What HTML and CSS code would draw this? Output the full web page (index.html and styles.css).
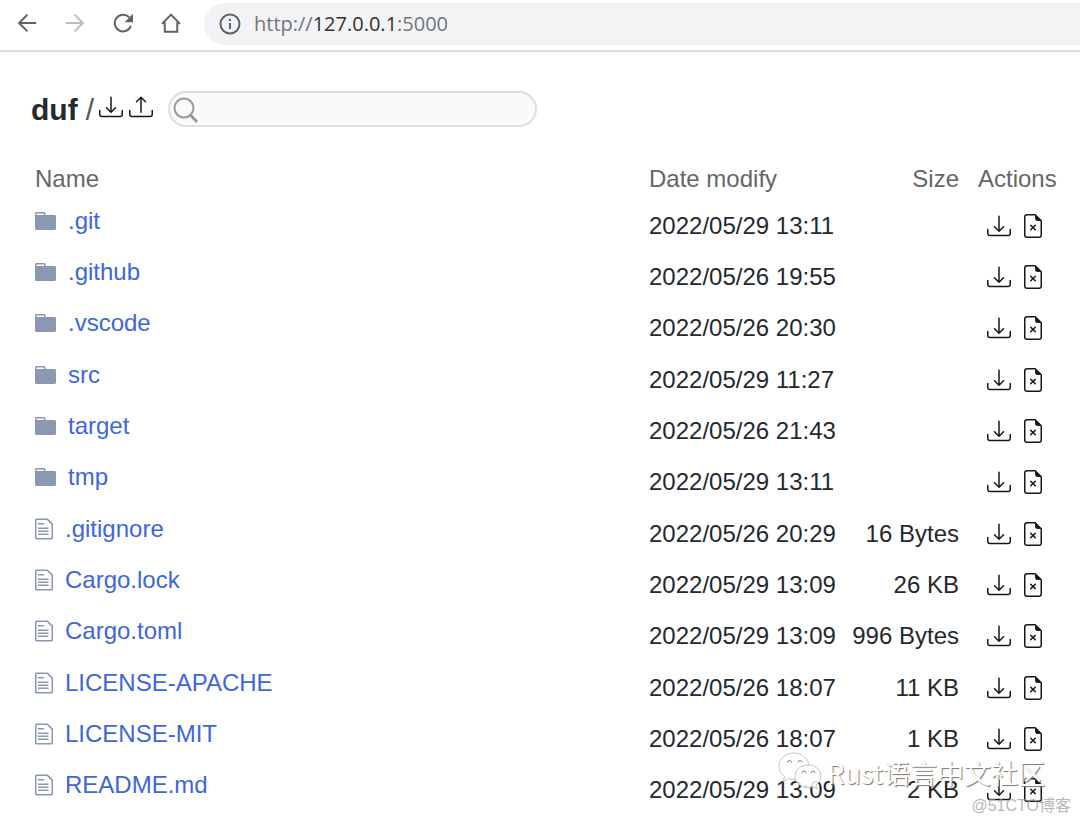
FILE: index.html
```html
<!DOCTYPE html>
<html lang="en">
<head>
<meta charset="utf-8">
<title>duf</title>
<link rel="stylesheet" href="styles.css">
</head>
<body>
<svg class="sprite" aria-hidden="true">
  <symbol id="download" viewBox="0 0 16 16"><path d="M.5 9.9a.5.5 0 0 1 .5.5v2.5a1 1 0 0 0 1 1h12a1 1 0 0 0 1-1v-2.5a.5.5 0 0 1 1 0v2.5a2 2 0 0 1-2 2H2a2 2 0 0 1-2-2v-2.5a.5.5 0 0 1 .5-.5z"/><path d="M7.646 11.854a.5.5 0 0 0 .708 0l3-3a.5.5 0 0 0-.708-.708L8.5 10.293V1.5a.5.5 0 0 0-1 0v8.793L5.354 8.146a.5.5 0 1 0-.708.708l3 3z"/></symbol>
  <symbol id="upload" viewBox="0 0 16 16"><path d="M.5 9.9a.5.5 0 0 1 .5.5v2.5a1 1 0 0 0 1 1h12a1 1 0 0 0 1-1v-2.5a.5.5 0 0 1 1 0v2.5a2 2 0 0 1-2 2H2a2 2 0 0 1-2-2v-2.5a.5.5 0 0 1 .5-.5z"/><path d="M7.646 1.146a.5.5 0 0 1 .708 0l3 3a.5.5 0 0 1-.708.708L8.5 2.707V11.5a.5.5 0 0 1-1 0V2.707L5.354 4.854a.5.5 0 1 1-.708-.708l3-3z"/></symbol>
  <symbol id="delete" viewBox="0 0 16 16"><path d="M6.854 7.146a.5.5 0 1 0-.708.708L7.293 9l-1.147 1.146a.5.5 0 0 0 .708.708L8 9.707l1.146 1.147a.5.5 0 0 0 .708-.708L8.707 9l1.147-1.146a.5.5 0 0 0-.708-.708L8 8.293 6.854 7.146z"/><path d="M14 14V4.5L9.5 0H4a2 2 0 0 0-2 2v12a2 2 0 0 0 2 2h8a2 2 0 0 0 2-2zM9.5 3A1.5 1.5 0 0 0 11 4.5h2V14a1 1 0 0 1-1 1H4a1 1 0 0 1-1-1V2a1 1 0 0 1 1-1h5.5v2z"/><path d="M9.500 0L14 4.500H11A1.500 1.500 0 0 1 9.500 3z"/></symbol>
  <symbol id="folder" viewBox="0 0 14 16"><path d="M13 4H7V3c0-.66-.31-1-1-1H1c-.55 0-1 .45-1 1v10c0 .55.45 1 1 1h12c.55 0 1-.45 1-1V5c0-.55-.45-1-1-1zM6 4H1V3h5v1z" fill-rule="evenodd"/></symbol>
  <symbol id="file" viewBox="0 0 12 16"><path d="M6 5H2V4h4v1zM2 8h7V7H2v1zm0 2h7V9H2v1zm0 2h7v-1H2v1zm10-7.500V14c0 .55-.45 1-1 1H1c-.55 0-1-.45-1-1V2c0-.55.45-1 1-1h7.500L12 4.500zM11 5L8 2H1v12h10V5z"/></symbol>
</svg>

<header class="toolbar">
  <button class="tool" aria-label="Back"><svg viewBox="0 0 24 24"><path d="M23 12H3M12.500 2L2.500 12l10 10"/></svg></button>
  <button class="tool" aria-label="Forward" disabled><svg viewBox="0 0 24 24"><path d="M1 12h20M11.500 2l10 10-10 10"/></svg></button>
  <button class="tool" aria-label="Reload"><svg viewBox="0 0 24 24"><path d="M21.500 15.500A10 10 0 1 1 19.500 5.300"/><path class="solid" d="M24 1v10H14z"/></svg></button>
  <button class="tool" aria-label="Home"><svg viewBox="0 0 24 24"><path d="M1.200 13L12 2l10.800 11M4.500 11v11.500h15V11"/></svg></button>
  <div class="address">
    <svg class="info" viewBox="0 0 22 22" aria-hidden="true"><circle cx="11" cy="11" r="9.500"/><path d="M11 10v6M11 6v2"/></svg>
    <span class="url">http://<b>127.0.0.1</b>:5000</span>
  </div>
</header>

<main class="page">
  <div class="head">
    <h1 class="crumb"><b>duf</b><span class="slash">/</span></h1>
    <div class="tools">
      <a href="#" aria-label="Download folder"><svg class="icon"><use href="#download"/></svg></a>
      <button class="plain" aria-label="Upload files"><svg class="icon"><use href="#upload"/></svg></button>
    </div>
    <form class="search">
      <svg class="lens" viewBox="0 0 26 26" aria-hidden="true"><circle cx="11" cy="11" r="9.500"/><path class="handle" d="M17.500 18l6.500 7"/></svg>
      <input type="text" aria-label="Search">
    </form>
  </div>

  <table class="files">
    <thead>
      <tr><th class="name">Name</th><th class="date">Date modify</th><th class="size">Size</th><th class="actions">Actions</th></tr>
    </thead>
    <tbody>
      <tr><td class="name"><a href="#"><svg class="folder"><use href="#folder"/></svg>.git</a></td><td>2022/05/29 13:11</td><td class="size"></td><td class="actions"><div class="pair"><a href="#" aria-label="Download"><svg class="icon"><use href="#download"/></svg></a><button class="plain" aria-label="Delete"><svg class="icon"><use href="#delete"/></svg></button></div></td></tr>
      <tr><td class="name"><a href="#"><svg class="folder"><use href="#folder"/></svg>.github</a></td><td>2022/05/26 19:55</td><td class="size"></td><td class="actions"><div class="pair"><a href="#" aria-label="Download"><svg class="icon"><use href="#download"/></svg></a><button class="plain" aria-label="Delete"><svg class="icon"><use href="#delete"/></svg></button></div></td></tr>
      <tr><td class="name"><a href="#"><svg class="folder"><use href="#folder"/></svg>.vscode</a></td><td>2022/05/26 20:30</td><td class="size"></td><td class="actions"><div class="pair"><a href="#" aria-label="Download"><svg class="icon"><use href="#download"/></svg></a><button class="plain" aria-label="Delete"><svg class="icon"><use href="#delete"/></svg></button></div></td></tr>
      <tr><td class="name"><a href="#"><svg class="folder"><use href="#folder"/></svg>src</a></td><td>2022/05/29 11:27</td><td class="size"></td><td class="actions"><div class="pair"><a href="#" aria-label="Download"><svg class="icon"><use href="#download"/></svg></a><button class="plain" aria-label="Delete"><svg class="icon"><use href="#delete"/></svg></button></div></td></tr>
      <tr><td class="name"><a href="#"><svg class="folder"><use href="#folder"/></svg>target</a></td><td>2022/05/26 21:43</td><td class="size"></td><td class="actions"><div class="pair"><a href="#" aria-label="Download"><svg class="icon"><use href="#download"/></svg></a><button class="plain" aria-label="Delete"><svg class="icon"><use href="#delete"/></svg></button></div></td></tr>
      <tr><td class="name"><a href="#"><svg class="folder"><use href="#folder"/></svg>tmp</a></td><td>2022/05/29 13:11</td><td class="size"></td><td class="actions"><div class="pair"><a href="#" aria-label="Download"><svg class="icon"><use href="#download"/></svg></a><button class="plain" aria-label="Delete"><svg class="icon"><use href="#delete"/></svg></button></div></td></tr>
      <tr><td class="name"><a href="#"><svg class="file"><use href="#file"/></svg>.gitignore</a></td><td>2022/05/26 20:29</td><td class="size">16 Bytes</td><td class="actions"><div class="pair"><a href="#" aria-label="Download"><svg class="icon"><use href="#download"/></svg></a><button class="plain" aria-label="Delete"><svg class="icon"><use href="#delete"/></svg></button></div></td></tr>
      <tr><td class="name"><a href="#"><svg class="file"><use href="#file"/></svg>Cargo.lock</a></td><td>2022/05/29 13:09</td><td class="size">26 KB</td><td class="actions"><div class="pair"><a href="#" aria-label="Download"><svg class="icon"><use href="#download"/></svg></a><button class="plain" aria-label="Delete"><svg class="icon"><use href="#delete"/></svg></button></div></td></tr>
      <tr><td class="name"><a href="#"><svg class="file"><use href="#file"/></svg>Cargo.toml</a></td><td>2022/05/29 13:09</td><td class="size">996 Bytes</td><td class="actions"><div class="pair"><a href="#" aria-label="Download"><svg class="icon"><use href="#download"/></svg></a><button class="plain" aria-label="Delete"><svg class="icon"><use href="#delete"/></svg></button></div></td></tr>
      <tr><td class="name"><a href="#"><svg class="file"><use href="#file"/></svg>LICENSE-APACHE</a></td><td>2022/05/26 18:07</td><td class="size">11 KB</td><td class="actions"><div class="pair"><a href="#" aria-label="Download"><svg class="icon"><use href="#download"/></svg></a><button class="plain" aria-label="Delete"><svg class="icon"><use href="#delete"/></svg></button></div></td></tr>
      <tr><td class="name"><a href="#"><svg class="file"><use href="#file"/></svg>LICENSE-MIT</a></td><td>2022/05/26 18:07</td><td class="size">1 KB</td><td class="actions"><div class="pair"><a href="#" aria-label="Download"><svg class="icon"><use href="#download"/></svg></a><button class="plain" aria-label="Delete"><svg class="icon"><use href="#delete"/></svg></button></div></td></tr>
      <tr><td class="name"><a href="#"><svg class="file"><use href="#file"/></svg>README.md</a></td><td>2022/05/29 13:09</td><td class="size">2 KB</td><td class="actions"><div class="pair"><a href="#" aria-label="Download"><svg class="icon"><use href="#download"/></svg></a><button class="plain" aria-label="Delete"><svg class="icon"><use href="#delete"/></svg></button></div></td></tr>
    </tbody>
  </table>
</main>

<div class="channel">
  <svg class="wechat" viewBox="0 0 44 38" aria-hidden="true">
    <path d="M16 1C7.500 1 1 7 1 14.500c0 4.300 2.200 7.800 5.600 10.200L5 29.500l5.500-2.800c2 .6 3.600.8 5.500.8 8.500 0 15-6 15-13S24.500 1 16 1z"/>
    <path d="M30 13c-7.300 0-13 5-13 11.200S22.700 35.400 30 35.400c1.600 0 3.200-.3 4.700-.8l4.300 2.300-1.200-3.800c3.200-2.300 5.200-5.300 5.200-8.900C43 18 37.300 13 30 13z"/>
    <path class="eye" d="M9.500 10.500a2 2 0 0 1 4 0M20 10.500a2 2 0 0 1 4 0M24 21a2 2 0 0 1 4 0M33 21a2 2 0 0 1 4 0"/>
  </svg>
  <span>Rust语言中文社区</span>
</div>
<div class="credit">@51CTO博客</div>
</body>
</html>
```

FILE: styles.css
```css
* { box-sizing: border-box; }

body {
  position: relative;
  min-height: 100vh;
  margin: 0;
  overflow: hidden;
  background: #fff;
  color: #24292e;
  font: 24px/28px "Liberation Sans", Arial, sans-serif;
}

a { color: inherit; text-decoration: none; }
svg { display: block; }
.sprite { position: absolute; width: 0; height: 0; }

/* Browser bar */
.toolbar {
  display: flex;
  align-items: center;
  gap: 28px;
  height: 52px;
  padding: 0 0 4px 17px;
  border-bottom: 2px solid #dddedf;
}

.tool {
  width: 20px;
  height: 20px;
  padding: 0;
  border: 0;
  background: none;
  color: #5f6368;
}
.tool:disabled { color: #babcbe; }
.tool svg { width: 20px; height: 20px; fill: none; stroke: currentColor; stroke-width: 2.4; }
.tool .solid { fill: currentColor; stroke: none; }

.address {
  display: flex;
  flex: 1;
  align-items: center;
  gap: 13px;
  height: 42px;
  margin: 2px 0 0 -5px;
  padding-left: 15px;
  border-radius: 21px 0 0 21px;
  background: #f1f3f4;
  color: #73777b;
  font: 20px/28px "Open Sans", "Noto Sans", sans-serif;
}
.address b { color: #303236; font-weight: 400; }
.info { width: 22px; height: 22px; fill: none; stroke: #5f6368; stroke-width: 2; }

/* Page heading */
.page { padding: 39px 20px 0 31px; }

.head { display: flex; align-items: center; height: 36px; }

.crumb { display: flex; gap: 8px; margin: 0; padding-top: 2px; font-size: 30px; font-weight: 400; line-height: 36px; }
.slash { color: #555; }

.tools { display: flex; gap: 6px; margin: 0 15px 4px 5px; }
.plain { padding: 0; border: 0; background: none; color: inherit; }
.icon { width: 24px; height: 24px; fill: #15181b; }

.search {
  display: flex;
  align-items: center;
  width: 369px;
  height: 36px;
  padding: 2px 16px 0 3px;
  border: 2px solid #dedede;
  border-radius: 18px;
  background: #fafafa;
}
.search input { flex: 1; min-width: 0; border: 0; outline: 0; background: none; font: inherit; }
.lens { width: 26px; height: 26px; fill: none; stroke: #999; stroke-width: 2; }
.handle { stroke-width: 3; }

/* File list */
.files {
  width: 100%;
  margin-top: 36px;
  border-collapse: collapse;
  table-layout: fixed;
}
.files th {
  height: 40px;
  padding: 2px 0 0;
  color: #666;
  font-weight: 400;
  text-align: left;
  vertical-align: top;
}
.files td { height: 51px; padding: 9px 0 0; vertical-align: top; white-space: nowrap; }
.files tr:nth-child(3n) td { height: 52px; }
.files .name { padding-left: 4px; }
.files td.name { padding-top: 4px; color: #4067d8; }
.files .date { width: 190px; }
.files .size { width: 120px; text-align: right; }
.files .actions { width: 101px; padding-left: 19px; }

.name a { display: inline-flex; align-items: center; }
.folder { width: 21px; height: 24px; margin-right: 12px; fill: #8a98b2; }
.file { width: 18px; height: 24px; margin-right: 12px; fill: #8a98b2; }

.pair { display: flex; gap: 10px; padding: 2px 0 0 9px; }

/* Marks laid over the list */
.channel {
  position: absolute;
  right: 35px;
  bottom: 30px;
  display: flex;
  align-items: center;
  gap: 5px;
  color: #fff;
  font: 27px/36px "Noto Sans CJK SC", sans-serif;
  text-shadow: 1px 1px 1px #777;
  pointer-events: none;
}
.wechat { width: 44px; height: 38px; margin-bottom: 4px; fill: rgba(255, 255, 255, .85); stroke: #c4c4c4; stroke-width: 1; }
.wechat .eye { fill: none; stroke: #888; }

.credit {
  position: absolute;
  right: 9px;
  bottom: 6px;
  color: rgba(150, 150, 150, .7);
  font: 16px/24px "Liberation Sans", "Noto Sans CJK SC", sans-serif;
  pointer-events: none;
}
```
